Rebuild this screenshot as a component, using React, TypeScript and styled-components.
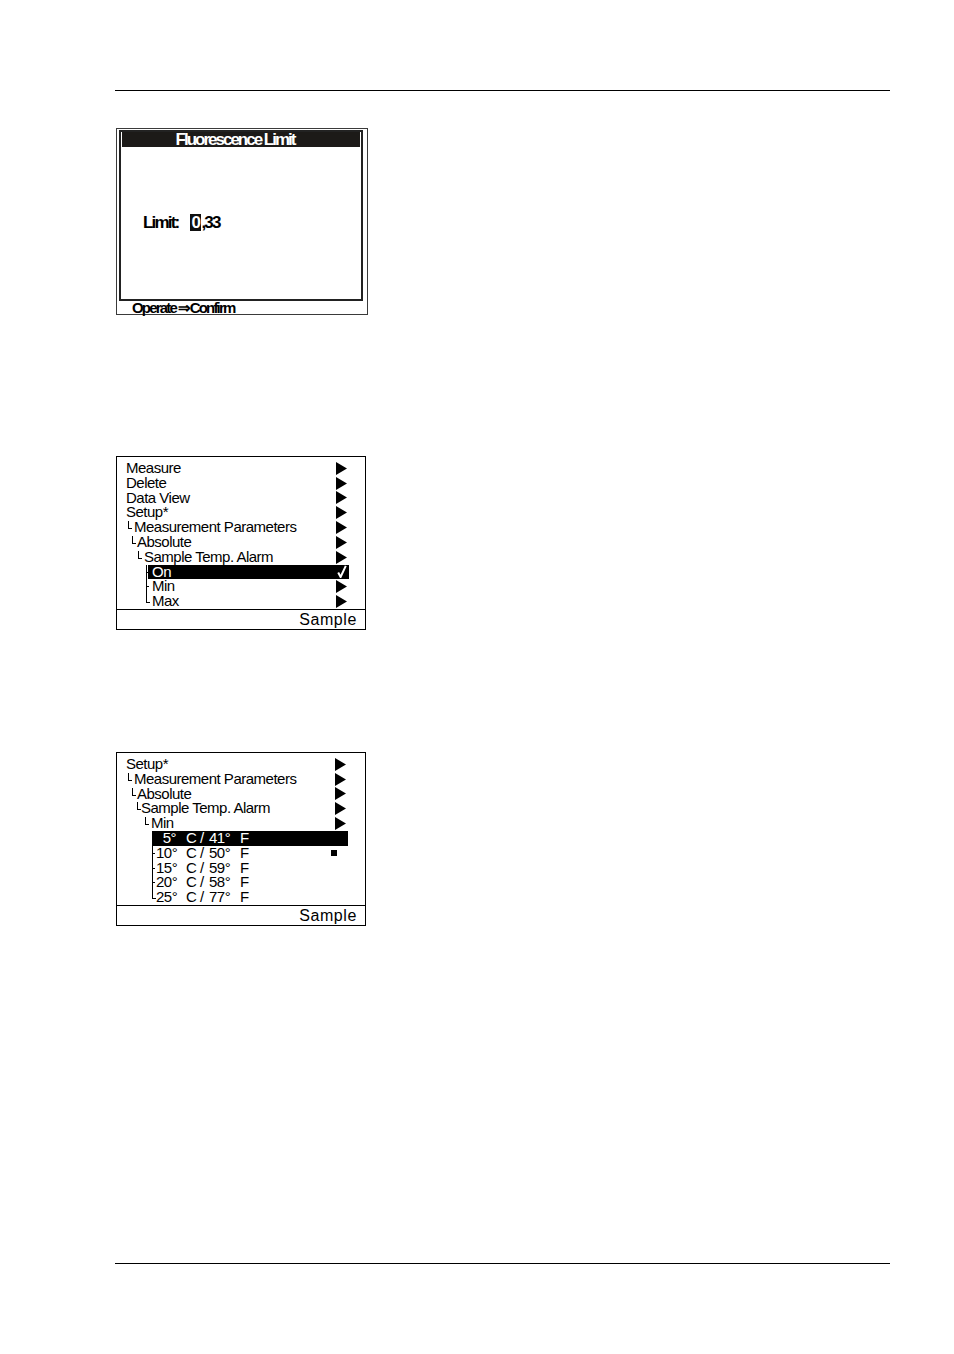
import React from "react";
import styled, { createGlobalStyle, css } from "styled-components";

const GlobalStyle = createGlobalStyle`
  html, body { margin: 0; padding: 0; background: #fff; }
  body { font-family: "Liberation Sans", Arial, sans-serif; color: #000; }
`;

const Page = styled.div`
  width: 954px;
  height: 1354px;
  padding-left: 115px;
  box-sizing: border-box;
  display: flex;
  flex-direction: column;
  align-items: flex-start;
`;

const Rule = styled.div<{ $top: number }>`
  width: 775px;
  height: 1px;
  background: #000;
  margin-top: ${(p) => p.$top}px;
`;

/* ---------- first display: fluorescence limit ---------- */

const LcdFrame = styled.div`
  margin: 37px 0 0 1px;
  width: 252px;
  box-sizing: border-box;
  border: 1px solid #3a3a3a;
  display: flex;
  flex-direction: column;
`;

const LcdInner = styled.div`
  margin: 1px 0 0 2px;
  width: 244px;
  height: 171px;
  box-sizing: border-box;
  border: 2px solid #222;
  display: flex;
  flex-direction: column;
`;

const TitleBar = styled.div`
  margin: 0 1px;
  height: 15px;
  padding-right: 12px;
  background: #1c1a18;
  color: #fff;
  font-weight: 700;
  font-size: 17px;
  line-height: 15px;
  letter-spacing: -2px;
  text-align: center;
  white-space: nowrap;
`;

const LimitRow = styled.div`
  margin-top: 67px;
  padding-left: 22px;
  display: flex;
  align-items: center;
  font-weight: 700;
  font-size: 17px;
  line-height: 17px;
  letter-spacing: -1.8px;
`;

const CursorDigit = styled.span`
  margin-left: 12px;
  padding: 0 1px;
  letter-spacing: -0.5px;
  background: #111;
  color: #fff;
`;

const Hint = styled.div`
  height: 13px;
  padding-left: 15px;
  font-weight: 700;
  font-size: 15px;
  line-height: 13px;
  letter-spacing: -1.8px;
  white-space: nowrap;
`;

/* ---------- menu displays ---------- */

const MenuScreen = styled.div<{ $top: number }>`
  margin: ${(p) => p.$top}px 0 0 1px;
  width: 250px;
  height: 174px;
  box-sizing: border-box;
  border: 1px solid #000;
  display: flex;
  flex-direction: column;
`;

const MenuList = styled.div`
  flex: 1;
  padding-top: 4px;
  box-sizing: border-box;
  overflow: hidden;
`;

const MenuRow = styled.div<{ $left: number; $right: number }>`
  height: 14.8px;
  display: flex;
  align-items: stretch;
  padding-left: ${(p) => p.$left}px;
  padding-right: ${(p) => p.$right}px;
  font-size: 15px;
  line-height: 14.8px;
  letter-spacing: -0.5px;
  white-space: nowrap;
`;

type BranchKind = "corner" | "tee" | "end";

const Branch = styled.span<{ $kind: BranchKind; $width: number }>`
  flex: none;
  position: relative;
  width: ${(p) => p.$width}px;

  &::before,
  &::after {
    content: "";
    position: absolute;
    left: 0;
  }

  ${(p) =>
    p.$kind === "corner" &&
    css`
      &::before {
        top: 1px;
        width: 3px;
        height: 7px;
        border-left: 1px solid #000;
        border-bottom: 1px solid #000;
      }
    `}

  ${(p) =>
    p.$kind === "tee" &&
    css`
      &::before {
        top: 0;
        bottom: 0;
        border-left: 1px solid #000;
      }
      &::after {
        top: 7px;
        width: 3px;
        border-top: 1px solid #000;
      }
    `}

  ${(p) =>
    p.$kind === "end" &&
    css`
      &::before {
        top: 0;
        height: 8px;
        width: 3px;
        border-left: 1px solid #000;
        border-bottom: 1px solid #000;
      }
    `}
`;

const Label = styled.span<{ $pad: number; $selected?: boolean }>`
  flex: 1;
  display: flex;
  align-items: center;
  justify-content: space-between;
  padding-left: ${(p) => p.$pad}px;
  padding-right: 2px;
  background: ${(p) => (p.$selected ? "#000" : "transparent")};
  color: ${(p) => (p.$selected ? "#fff" : "#000")};
`;

const Square = styled.span`
  width: 6px;
  height: 6px;
  margin-right: 9px;
  background: #000;
`;

const TempC = styled.span`
  display: inline-block;
  width: 20px;
  margin-right: 10px;
  text-align: right;
`;

const TempUnit = styled.span<{ $w: number }>`
  display: inline-block;
  width: ${(p) => p.$w}px;
`;

const MenuFooter = styled.div`
  height: 19px;
  border-top: 1px solid #000;
  padding-right: 8px;
  text-align: right;
  font-size: 16px;
  line-height: 19px;
  letter-spacing: 0.6px;
`;

const Arrow = () => (
  <svg width="11" height="13" viewBox="0 0 11 13">
    <polygon points="0,0 11,6.5 0,13" fill="#000" />
  </svg>
);

const Check = () => (
  <svg width="10" height="13" viewBox="0 0 10 13">
    <path d="M1.2 7.5 L3.6 12 L8.8 0.8" stroke="#fff" strokeWidth="2" fill="none" />
  </svg>
);

type Mark = "arrow" | "check" | "square" | undefined;

type Item = {
  text: React.ReactNode;
  textX: number;
  branch?: BranchKind;
  branchX?: number;
  labelX?: number;
  selected?: boolean;
  mark?: Mark;
};

const renderMark = (mark: Mark) => {
  if (mark === "arrow") return <Arrow />;
  if (mark === "check") return <Check />;
  if (mark === "square") return <Square />;
  return null;
};

const Menu = ({ top, items, labelEnd }: { top: number; items: Item[]; labelEnd: number }) => (
  <MenuScreen $top={top}>
    <MenuList>
      {items.map((it, i) => {
        const labelX = it.labelX ?? it.textX;
        const start = it.branch ? it.branchX! : labelX;
        return (
          <MenuRow key={i} $left={start - 1} $right={249 - labelEnd}>
            {it.branch && <Branch $kind={it.branch} $width={labelX - it.branchX!} />}
            <Label $pad={it.textX - labelX} $selected={it.selected}>
              <span>{it.text}</span>
              {renderMark(it.mark)}
            </Label>
          </MenuRow>
        );
      })}
    </MenuList>
    <MenuFooter>Sample</MenuFooter>
  </MenuScreen>
);

const alarmItems: Item[] = [
  { text: "Measure", textX: 10, mark: "arrow" },
  { text: "Delete", textX: 10, mark: "arrow" },
  { text: "Data View", textX: 10, mark: "arrow" },
  { text: "Setup*", textX: 10, mark: "arrow" },
  { text: "Measurement Parameters", branch: "corner", branchX: 12, textX: 18, mark: "arrow" },
  { text: "Absolute", branch: "corner", branchX: 16, textX: 21, mark: "arrow" },
  { text: "Sample Temp. Alarm", branch: "corner", branchX: 22, textX: 28, mark: "arrow" },
  { text: "On", branch: "tee", branchX: 30, labelX: 32, textX: 36, selected: true, mark: "check" },
  { text: "Min", branch: "tee", branchX: 30, labelX: 32, textX: 36, mark: "arrow" },
  { text: "Max", branch: "end", branchX: 30, labelX: 32, textX: 36, mark: "arrow" },
];

const temps: [string, string][] = [
  ["5°", "41°"],
  ["10°", "50°"],
  ["15°", "59°"],
  ["20°", "58°"],
  ["25°", "77°"],
];

const tempText = (c: string, f: string) => (
  <>
    <TempC>{c}</TempC>
    <TempUnit $w={23}>C /</TempUnit>
    <TempUnit $w={31}>{f}</TempUnit>F
  </>
);

const minItems: Item[] = [
  { text: "Setup*", textX: 10, mark: "arrow" },
  { text: "Measurement Parameters", branch: "corner", branchX: 12, textX: 18, mark: "arrow" },
  { text: "Absolute", branch: "corner", branchX: 16, textX: 21, mark: "arrow" },
  { text: "Sample Temp. Alarm", branch: "corner", branchX: 21, textX: 25, mark: "arrow" },
  { text: "Min", branch: "corner", branchX: 29, textX: 35, mark: "arrow" },
  ...temps.map(([c, f], i): Item => ({
    text: tempText(c, f),
    branch: i === temps.length - 1 ? "end" : "tee",
    branchX: 36,
    labelX: 37,
    textX: 40,
    selected: i === 0,
    mark: i === 1 ? "square" : undefined,
  })),
];

export default function App() {
  return (
    <>
      <GlobalStyle />
      <Page>
        <Rule $top={90} />

        <LcdFrame>
          <LcdInner>
            <TitleBar>Fluorescence Limit</TitleBar>
            <LimitRow>
              Limit:
              <CursorDigit>0</CursorDigit>,33
            </LimitRow>
          </LcdInner>
          <Hint>Operate ⇒Confirm</Hint>
        </LcdFrame>

        <Menu top={141} items={alarmItems} labelEnd={233} />
        <Menu top={122} items={minItems} labelEnd={232} />

        <Rule $top={337} />
      </Page>
    </>
  );
}
